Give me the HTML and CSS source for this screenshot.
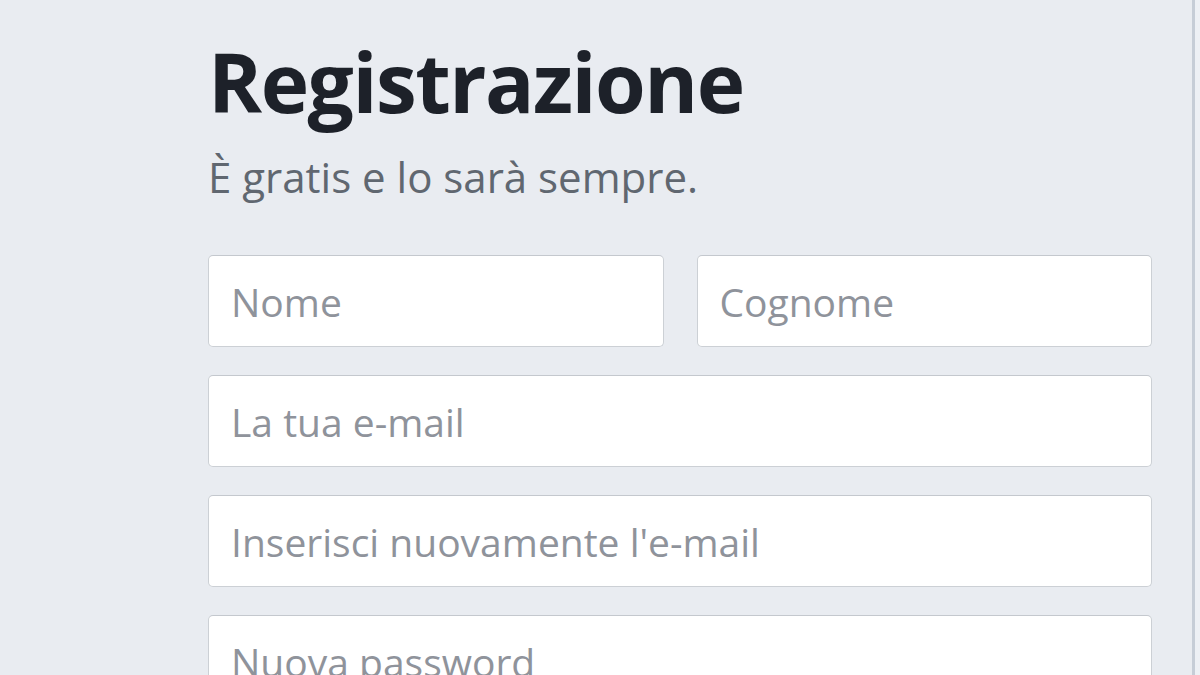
FILE: index.html
```html
<!DOCTYPE html>
<html lang="it">

<head>
    <meta charset="UTF-8">
    <meta name="viewport" content="width=device-width, initial-scale=1.0">
    <title>Registrazione</title>
    <link rel="stylesheet" href="styles.css">
</head>

<body>
    <div class="page">
        <div class="signup">
            <h1 class="title">Registrazione</h1>
            <p class="subtitle">È gratis e lo sarà sempre.</p>

            <form class="signup-form">
                <div class="name-row">
                    <input type="text" class="field" placeholder="Nome">
                    <input type="text" class="field" placeholder="Cognome">
                </div>
                <input type="text" class="field" placeholder="La tua e-mail">
                <input type="text" class="field" placeholder="Inserisci nuovamente l'e-mail">
                <input type="password" class="field" placeholder="Nuova password">
            </form>
        </div>
        <div class="scroll-edge"></div>
    </div>
</body>

</html>
```

FILE: styles.css
```css
* {
    margin: 0;
    padding: 0;
    box-sizing: border-box;
}

body {
    font-family: 'Open Sans', 'Noto Sans', sans-serif;
    background-color: #e9ecf1;
    height: 100vh;
    overflow: hidden;
}

.page {
    display: flex;
    height: 100%;
}

.signup {
    width: 944px;
    margin-left: 208px;
    padding-top: 40px;
}

.title {
    font-size: 82px;
    font-weight: 700;
    line-height: 1;
    color: #1d2129;
    letter-spacing: -1.5px;
}

.subtitle {
    font-size: 42px;
    line-height: 1.2;
    color: #606770;
    margin-top: 30px;
    margin-bottom: 53px;
}

.signup-form {
    display: flex;
    flex-direction: column;
    gap: 28px;
}

.name-row {
    display: grid;
    grid-template-columns: 1fr 1fr;
    gap: 33px;
}

.field {
    width: 100%;
    height: 92px;
    padding: 0 22px;
    border: 1px solid #ccd0d5;
    border-top-color: #c4c8ce;
    border-radius: 5px;
    background: #fff;
    font-family: inherit;
    font-size: 39px;
    color: #1d2129;
    outline: none;
}

.field::placeholder {
    color: #8f939b;
}

.scroll-edge {
    margin-left: auto;
    width: 8px;
    border-left: 3px solid #c6cdd7;
    background: #edf0f5;
}
```
